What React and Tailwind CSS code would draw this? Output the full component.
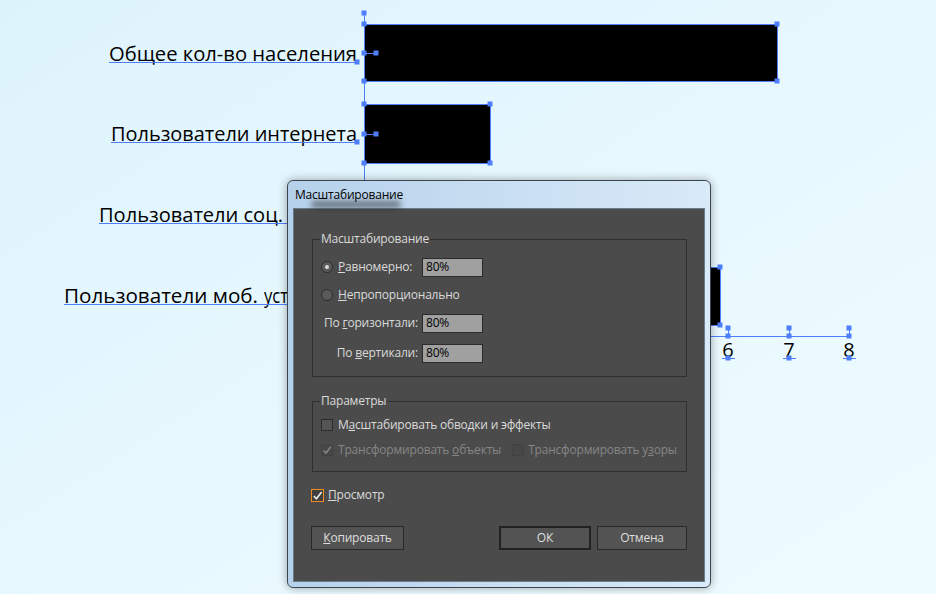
const BLUE = '#4f7efc'

function Handle({ x, y }) {
  return <rect x={x - 2.5} y={y - 2.5} width="5" height="5" fill={BLUE} />
}

function Bar({ top, bottom, right }) {
  const mid = Math.round((top + bottom) / 2)
  return (
    <g>
      <rect x="364.5" y={top + 0.5} width={right - 364} height={bottom - top} fill="#000" stroke={BLUE} />
      <line x1="364" y1={mid + 0.5} x2="376" y2={mid + 0.5} stroke={BLUE} />
      <Handle x={364} y={top} />
      <Handle x={364} y={bottom} />
      <Handle x={364} y={mid} />
      <Handle x={376} y={mid} />
      <Handle x={right} y={top} />
      <Handle x={right} y={bottom} />
    </g>
  )
}

// label text: parts = [[text, x, width]], underline from x1 to x2, handle at the right end
function Label({ parts, y, x1, x2 }) {
  return (
    <g>
      {parts.map(([t, x, w]) => (
        <text key={t} x={x} y={y} fontSize="20" fontWeight="500" fill="#000" textLength={w} lengthAdjust="spacingAndGlyphs">
          {t}
        </text>
      ))}
      <line x1={x1} y1={y + 1.5} x2={x2} y2={y + 1.5} stroke={BLUE} />
      <Handle x={x2} y={y + 1} />
    </g>
  )
}

function Chart() {
  const ticks = [
    { x: 728, v: '6' },
    { x: 789, v: '7' },
    { x: 849, v: '8' },
  ]
  return (
    <svg width="936" height="594" className="block" style={{ fontFamily: '"Open Sans", sans-serif' }}>
      <line x1="364.5" y1="13" x2="364.5" y2="336" stroke={BLUE} />
      <Handle x={364} y={13} />
      <line x1="364" y1="336.5" x2="849" y2="336.5" stroke={BLUE} />

      <Bar top={24} bottom={81} right={777} />
      <Bar top={104} bottom={163} right={490} />
      <Bar top={186} bottom={245} right={650} />
      <Bar top={267} bottom={325} right={720} />

      <Label parts={[['Общее кол-во населения', 109, 248]]} y={61} x1={109} x2={357} />
      <Label parts={[['Пользователи интернета', 111, 246]]} y={141} x1={111} x2={357} />
      <Label parts={[['Пользователи соц.', 99, 184]]} y={222} x1={99} x2={357} />
      <Label parts={[['Пользователи моб.', 64, 194], ['уст', 264, 24]]} y={303} x1={64} x2={357} />

      {ticks.map((t) => (
        <g key={t.v}>
          <line x1={t.x + 0.5} y1="328" x2={t.x + 0.5} y2="336" stroke={BLUE} />
          <Handle x={t.x} y={328} />
          <Handle x={t.x} y={336} />
          <text x={t.x} y="357" textAnchor="middle" fontSize="20" fontWeight="500" fill="#000">
            {t.v}
          </text>
          <line x1={t.x - 6} y1="358.5" x2={t.x + 7} y2="358.5" stroke={BLUE} />
          <Handle x={t.x} y={358} />
        </g>
      ))}
    </svg>
  )
}

function Radio({ checked }) {
  return (
    <span className="flex h-[12px] w-[12px] shrink-0 items-center justify-center rounded-full border border-[#2c2c2c] bg-[#5a5a5a]">
      {checked && <span className="h-[4px] w-[4px] rounded-full bg-[#dadada]" />}
    </span>
  )
}

function Check({ checked, disabled }) {
  return (
    <span
      className={`flex h-[12px] w-[12px] shrink-0 items-center justify-center border ${
        disabled ? 'border-[#424242] bg-[#474747]' : 'border-[#2c2c2c] bg-[#545454]'
      }`}
    >
      {checked && (
        <svg width="10" height="10" viewBox="0 0 10 10">
          <path d="M1.5 5.5 L4 8 L8.8 1.8" fill="none" stroke={disabled ? '#858585' : '#e6e6e6'} strokeWidth="1.6" />
        </svg>
      )}
    </span>
  )
}

function Field({ value }) {
  return (
    <div className="flex h-[19px] w-[61px] items-center border border-[#2b2b2b] bg-[#a0a0a0] pl-[3px] text-[12px] text-black">
      {value}
    </div>
  )
}

function Button({ children, primary, width }) {
  return (
    <button
      className={`flex h-[24px] items-center justify-center bg-[#535353] text-[12px] text-[#dedede] ${width} ${
        primary ? 'border-2 border-[#222]' : 'border border-[#292929]'
      }`}
    >
      {children}
    </button>
  )
}

function Dialog() {
  return (
    <div className="absolute left-[287px] top-[180px] flex h-[408px] w-[424px] flex-col rounded-[6px] border border-[#3c4550] bg-linear-to-r from-[#b5d1eb] via-[#c8def2] to-[#d9eaf8] px-[5px] pb-[5px] shadow-[0_0_10px_rgba(0,0,0,0.35)]">
      <div className="relative flex h-[27px] items-center pl-[2px] text-[12px] tracking-[-0.2px] text-black">
        <span className="absolute left-[18px] top-[20px] h-[7px] w-[90px] rounded-full bg-[#2a2a2a] opacity-60 blur-[3px]" />
        <span className="relative">Масштабирование</span>
      </div>
      <div className="flex flex-1 flex-col whitespace-nowrap border border-[#6a7b8c] bg-[#4b4b4b] px-[17px] pt-[22px] text-[12px] tracking-[-0.2px] text-[#dadada]">
        <fieldset className="ml-[1px] border border-[#2f2f2f] px-0 pb-[9px]">
          <legend className="ml-[7px] px-[1px] leading-[16px]">Масштабирование</legend>
          <div className="pt-[6px]">
            <div className="flex h-[28px] items-center">
              <div className="flex w-[109px] items-center gap-[5px] pl-[8px]">
                <Radio checked />
                <span>
                  <u>Р</u>авномерно:
                </span>
              </div>
              <Field value="80%" />
            </div>
            <div className="flex h-[28px] items-center gap-[5px] pl-[8px]">
              <Radio />
              <span>
                <u>Н</u>епропорционально
              </span>
            </div>
            <div className="flex h-[28px] items-center">
              <div className="w-[109px] pr-[4px] text-right">
                По <u>г</u>оризонтали:
              </div>
              <Field value="80%" />
            </div>
            <div className="mt-[2px] flex h-[28px] items-center">
              <div className="w-[109px] pr-[4px] text-right">
                По <u>в</u>ертикали:
              </div>
              <Field value="80%" />
            </div>
          </div>
        </fieldset>

        <fieldset className="ml-[1px] mt-[16px] border border-[#2f2f2f] px-0 pb-[11px]">
          <legend className="ml-[7px] px-[1px] leading-[16px]">Параметры</legend>
          <div className="pt-[6px]">
            <div className="flex h-[20px] items-center gap-[5px] pl-[8px]">
              <Check />
              <span>
                М<u>а</u>сштабировать обводки и эффекты
              </span>
            </div>
            <div className="mt-[5px] flex h-[20px] items-center pl-[8px] text-[#868686]">
              <div className="flex shrink-0 items-center gap-[5px]">
                <Check checked disabled />
                <span>
                  Трансформировать <u>о</u>бъекты
                </span>
              </div>
              <div className="ml-[11px] flex shrink-0 items-center gap-[4px]">
                <Check disabled />
                <span>
                  Трансформировать у<u>з</u>оры
                </span>
              </div>
            </div>
          </div>
        </fieldset>

        <div className="mt-[13px] flex h-[20px] items-center gap-[4px]">
          <span className="flex h-[13px] w-[13px] items-center justify-center border border-[#f08b1d] bg-[#3f3f3f]">
            <svg width="11" height="11" viewBox="0 0 11 11">
              <path d="M1.8 6 L4.4 8.7 L9.6 2" fill="none" stroke="#eeeeee" strokeWidth="1.6" />
            </svg>
          </span>
          <span>
            <u>П</u>росмотр
          </span>
        </div>

        <div className="mt-[21px] flex items-center">
          <Button width="w-[93px]">
            <u>К</u>опировать
          </Button>
          <div className="flex-1" />
          <Button primary width="w-[92px]">
            ОК
          </Button>
          <div className="w-[6px]" />
          <Button width="w-[90px]">Отмена</Button>
        </div>
      </div>
    </div>
  )
}

export default function App() {
  return (
    <div
      className="relative h-[594px] w-[936px] overflow-hidden bg-linear-to-br from-[#ddf3fc] via-[#e7f8fe] to-[#eefcff]"
      style={{ fontFamily: '"Open Sans", "Noto Sans", sans-serif' }}
    >
      <Chart />
      <Dialog />
    </div>
  )
}
